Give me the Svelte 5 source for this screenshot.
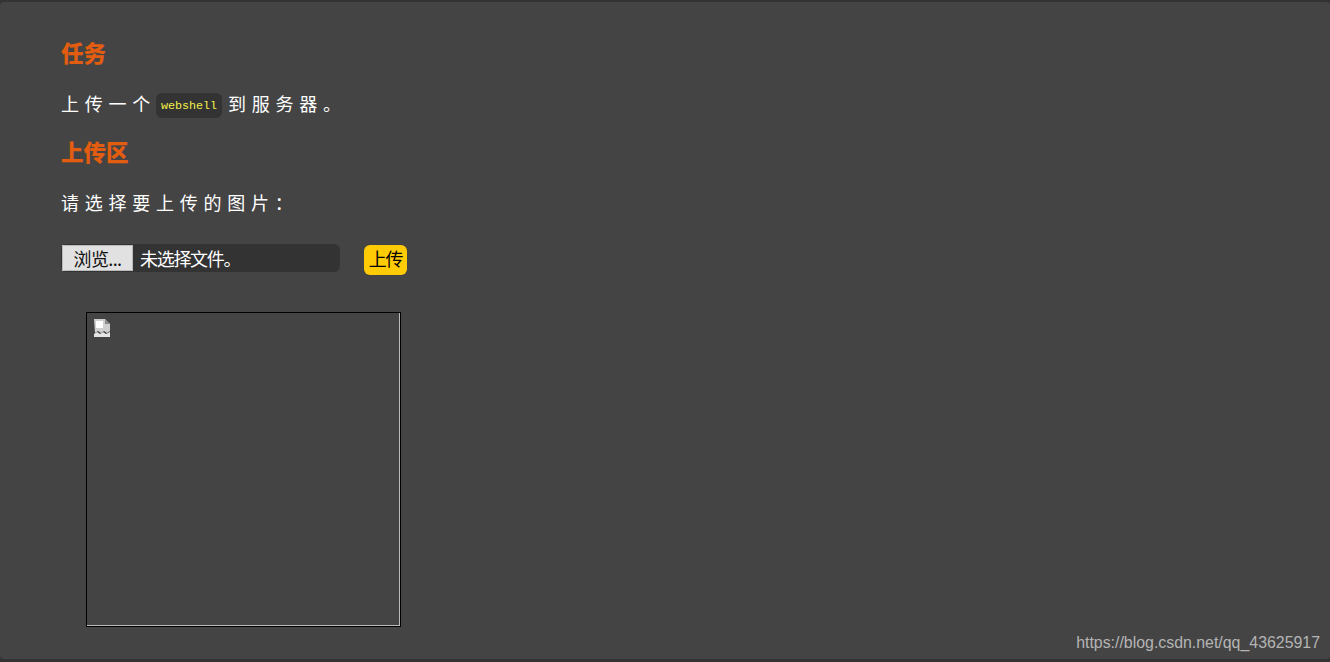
<script>
  const watermark = "https://blog.csdn.net/qq_43625917";
</script>

<div class="page">
  <main class="card">
    <h3>任务</h3>
    <p>上传一个<code>webshell</code>到服务器。</p>
    <h3>上传区</h3>
    <p>请选择要上传的图片：</p>

    <form class="upload" on:submit|preventDefault>
      <div class="file">
        <span class="browse">浏览...</span>
        <span class="filename">未选择文件。</span>
      </div>
      <button type="submit">上传</button>
    </form>

    <div class="preview">
      <!-- broken image placeholder -->
      <svg class="broken" width="16" height="18" viewBox="0 0 16 18">
        <path d="M0 0h11l5 5v7l-3 2-3-2-3 2-3-2-3 2z" fill="#cfcfcf" />
        <path d="M0 15l3-2 3 2 3-2 3 2 4-2v5H0z" fill="#e4e4e4" />
        <path d="M11 0v5h5z" fill="#8a8a8a" />
        <path d="M2 2h7v7H2z" fill="#fff" />
      </svg>
    </div>
  </main>
  <span class="watermark">{watermark}</span>
</div>

<style>
  :global(body) {
    margin: 0;
    background: #333;
  }
  .page {
    position: relative;
    height: 662px;
    padding: 2px 0 3px;
    box-sizing: border-box;
    overflow: hidden;
    font-family: "Noto Sans CJK SC", "Liberation Sans", sans-serif;
  }
  .card {
    height: 100%;
    box-sizing: border-box;
    background: #444;
    border-radius: 4px;
    padding: 36px 61px 0;
    color: #fff;
  }
  h3 {
    margin: 0;
    height: 28px;
    font-size: 22.5px;
    line-height: 28px;
    font-weight: 900;
    color: #e25d10;
  }
  p {
    margin: 0;
    font-size: 18px;
    line-height: 26px;
    letter-spacing: 5.75px;
    display: flex;
    align-items: center;
  }
  h3 + p {
    margin-top: 24px;
    margin-bottom: 21px;
  }
  code {
    font-family: "Liberation Mono", monospace;
    font-size: 11.7px;
    letter-spacing: 0;
    line-height: 24px;
    color: #f4f04a;
    background: #333;
    border-radius: 6px;
    padding: 1px 5px 0;
    margin: 2px 6px -2px 0;
  }
  .upload {
    display: flex;
    align-items: flex-start;
    gap: 24px;
    margin-top: 29px;
  }
  .file {
    display: flex;
    align-items: center;
    width: 279px;
    height: 28px;
    background: #333;
    border-radius: 6px;
    font-size: 18px;
  }
  .browse {
    width: 71px;
    height: 26px;
    margin-left: 1px;
    flex: none;
    box-sizing: border-box;
    background: #e1e1e1;
    border: 1px solid #bbb;
    color: #111;
    text-align: center;
    line-height: 24px;
    letter-spacing: -0.6px;
  }
  .filename {
    margin-left: 7px;
    letter-spacing: -1.3px;
  }
  button {
    width: 43px;
    height: 30px;
    margin-top: 1px;
    padding: 0 0 3px;
    border: 0;
    border-radius: 6px;
    background: #ffcb05;
    color: #000;
    font: inherit;
    font-size: 18px;
    letter-spacing: -1.2px;
    line-height: 27px;
  }
  .preview {
    position: relative;
    width: 315px;
    height: 315px;
    box-sizing: border-box;
    margin: 37px 0 0 25px;
    border: 1px solid #000;
    box-shadow: inset -1px -1px 0 #bbb;
  }
  .broken {
    position: absolute;
    left: 7px;
    top: 6px;
  }
  .watermark {
    position: absolute;
    right: 10px;
    bottom: 9px;
    font-family: "Liberation Sans", sans-serif;
    font-size: 15.9px;
    line-height: 20px;
    color: #b4b4b4;
  }
</style>
